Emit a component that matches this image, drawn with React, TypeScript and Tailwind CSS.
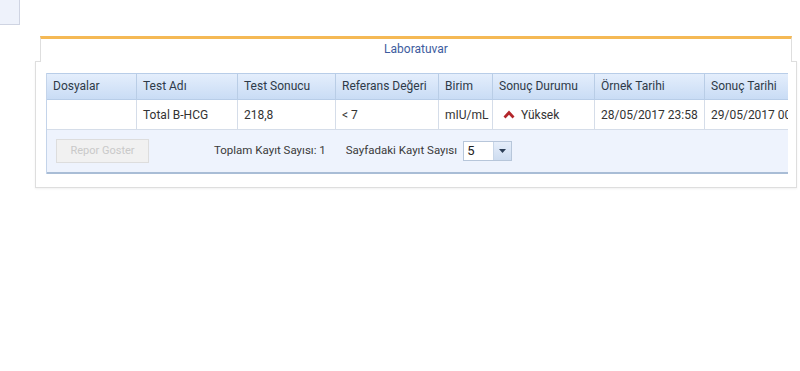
import { useState } from "react";

// ─── Data ───────────────────────────────────────────────────────────────────

const columns = [
  { key: "dosya", label: "Dosyalar", width: "w-[90px]" },
  { key: "ad", label: "Test Adı", width: "w-[101px]" },
  { key: "sonuc", label: "Test Sonucu", width: "w-[98px]" },
  { key: "ref", label: "Referans Değeri", width: "w-[103px]" },
  { key: "birim", label: "Birim", width: "w-[54px]" },
  { key: "durum", label: "Sonuç Durumu", width: "w-[102px]" },
  { key: "ornek", label: "Örnek Tarihi", width: "w-[110px]" },
  { key: "tarih", label: "Sonuç Tarihi", width: "w-[110px]" },
];

const rows = [
  {
    dosya: "",
    ad: "Total B-HCG",
    sonuc: "218,8",
    ref: "< 7",
    birim: "mIU/mL",
    durum: "Yüksek",
    ornek: "28/05/2017 23:58",
    tarih: "29/05/2017 00:41",
  },
];

function UpArrow() {
  return (
    <svg width="12" height="9" viewBox="0 0 12 9" className="shrink-0">
      <path d="M6 0.5 L11.5 6.5 L9.5 8.5 L6 4.8 L2.5 8.5 L0.5 6.5 Z" fill="#b3262b" />
    </svg>
  );
}

// ─── App ────────────────────────────────────────────────────────────────────

export default function App() {
  const [pageSize, setPageSize] = useState("5");

  return (
    <div className="h-[371px] w-[800px] overflow-hidden bg-white font-['Roboto',sans-serif] text-[12px] text-[#333]">
      {/* Side stub */}
      <div className="h-[25px] w-[20px] border-r border-b border-[#cfd4e2] bg-[#eef2fb]" />

      {/* Panel */}
      <div className="mt-[11px] ml-[35px] w-[762px]">
        <div className="relative z-10 mx-[5px] -mb-px h-[26px] border-x border-t-[3px] border-x-[#dedede] border-t-[#f5b955] bg-white pt-px text-center text-[12px] text-[#3d5c9e]">
          Laboratuvar
        </div>

        <div className="h-[127px] border border-[#dedede] pt-[11px] pr-[8px] pl-[10px] shadow-[0_1px_2px_rgba(0,0,0,0.06)]">
          <div className="overflow-hidden border-l border-[#c4d4ea]">
            {/* Header */}
            <div className="flex w-max h-[27px] border-y border-[#b8cde8] bg-gradient-to-b from-[#e4eefc] to-[#c9dcf5]">
              {columns.map((c) => (
                <div
                  key={c.key}
                  className={`${c.width} shrink-0 border-r border-[#b9cde6] px-[6px] leading-[25px] whitespace-nowrap text-[#2e3a48]`}
                >
                  {c.label}
                </div>
              ))}
            </div>

            {/* Rows */}
            {rows.map((r, i) => (
              <div key={i} className="flex w-max h-[30px] border-b border-[#d5dde9] bg-white">
                {columns.map((c) => (
                  <div
                    key={c.key}
                    className={`${c.width} flex shrink-0 items-center gap-[6px] border-r border-[#d5dde9] px-[6px] whitespace-nowrap`}
                  >
                    {c.key === "durum" ? (
                      <>
                        <span className="pl-[4px]">
                          <UpArrow />
                        </span>
                        {r.durum}
                      </>
                    ) : (
                      r[c.key as keyof typeof r]
                    )}
                  </div>
                ))}
              </div>
            ))}

            {/* Footer */}
            <div className="flex h-[44px] items-center border-b-2 border-[#a9bdd6] bg-[#eef3fd] pl-[9px] text-[11.5px] text-[#3a3a3a]">
              <button
                type="button"
                disabled
                className="h-[24px] w-[93px] border border-[#dddddd] bg-[#f1f1f1] text-[11px] text-[#c9c9c9]"
              >
                Repor Goster
              </button>
              <span className="ml-[65px]">Toplam Kayıt Sayısı: 1</span>
              <span className="ml-[20px]">Sayfadaki Kayıt Sayısı</span>
              <div className="ml-[6px] flex h-[20px] w-[49px] border border-[#b7c6da] bg-white">
                <div className="flex-1 pl-[3px] leading-[18px] text-[13px] text-[#222]">{pageSize}</div>
                <button
                  type="button"
                  onClick={() => setPageSize(pageSize === "5" ? "10" : "5")}
                  className="flex w-[18px] items-center justify-center border-l border-[#c8d6e8] bg-gradient-to-b from-[#e6eefa] to-[#cddcf0]"
                >
                  <svg width="7" height="4" viewBox="0 0 7 4">
                    <path d="M0 0 H7 L3.5 4 Z" fill="#2c3e56" />
                  </svg>
                </button>
              </div>
            </div>
          </div>
        </div>
      </div>
    </div>
  );
}
